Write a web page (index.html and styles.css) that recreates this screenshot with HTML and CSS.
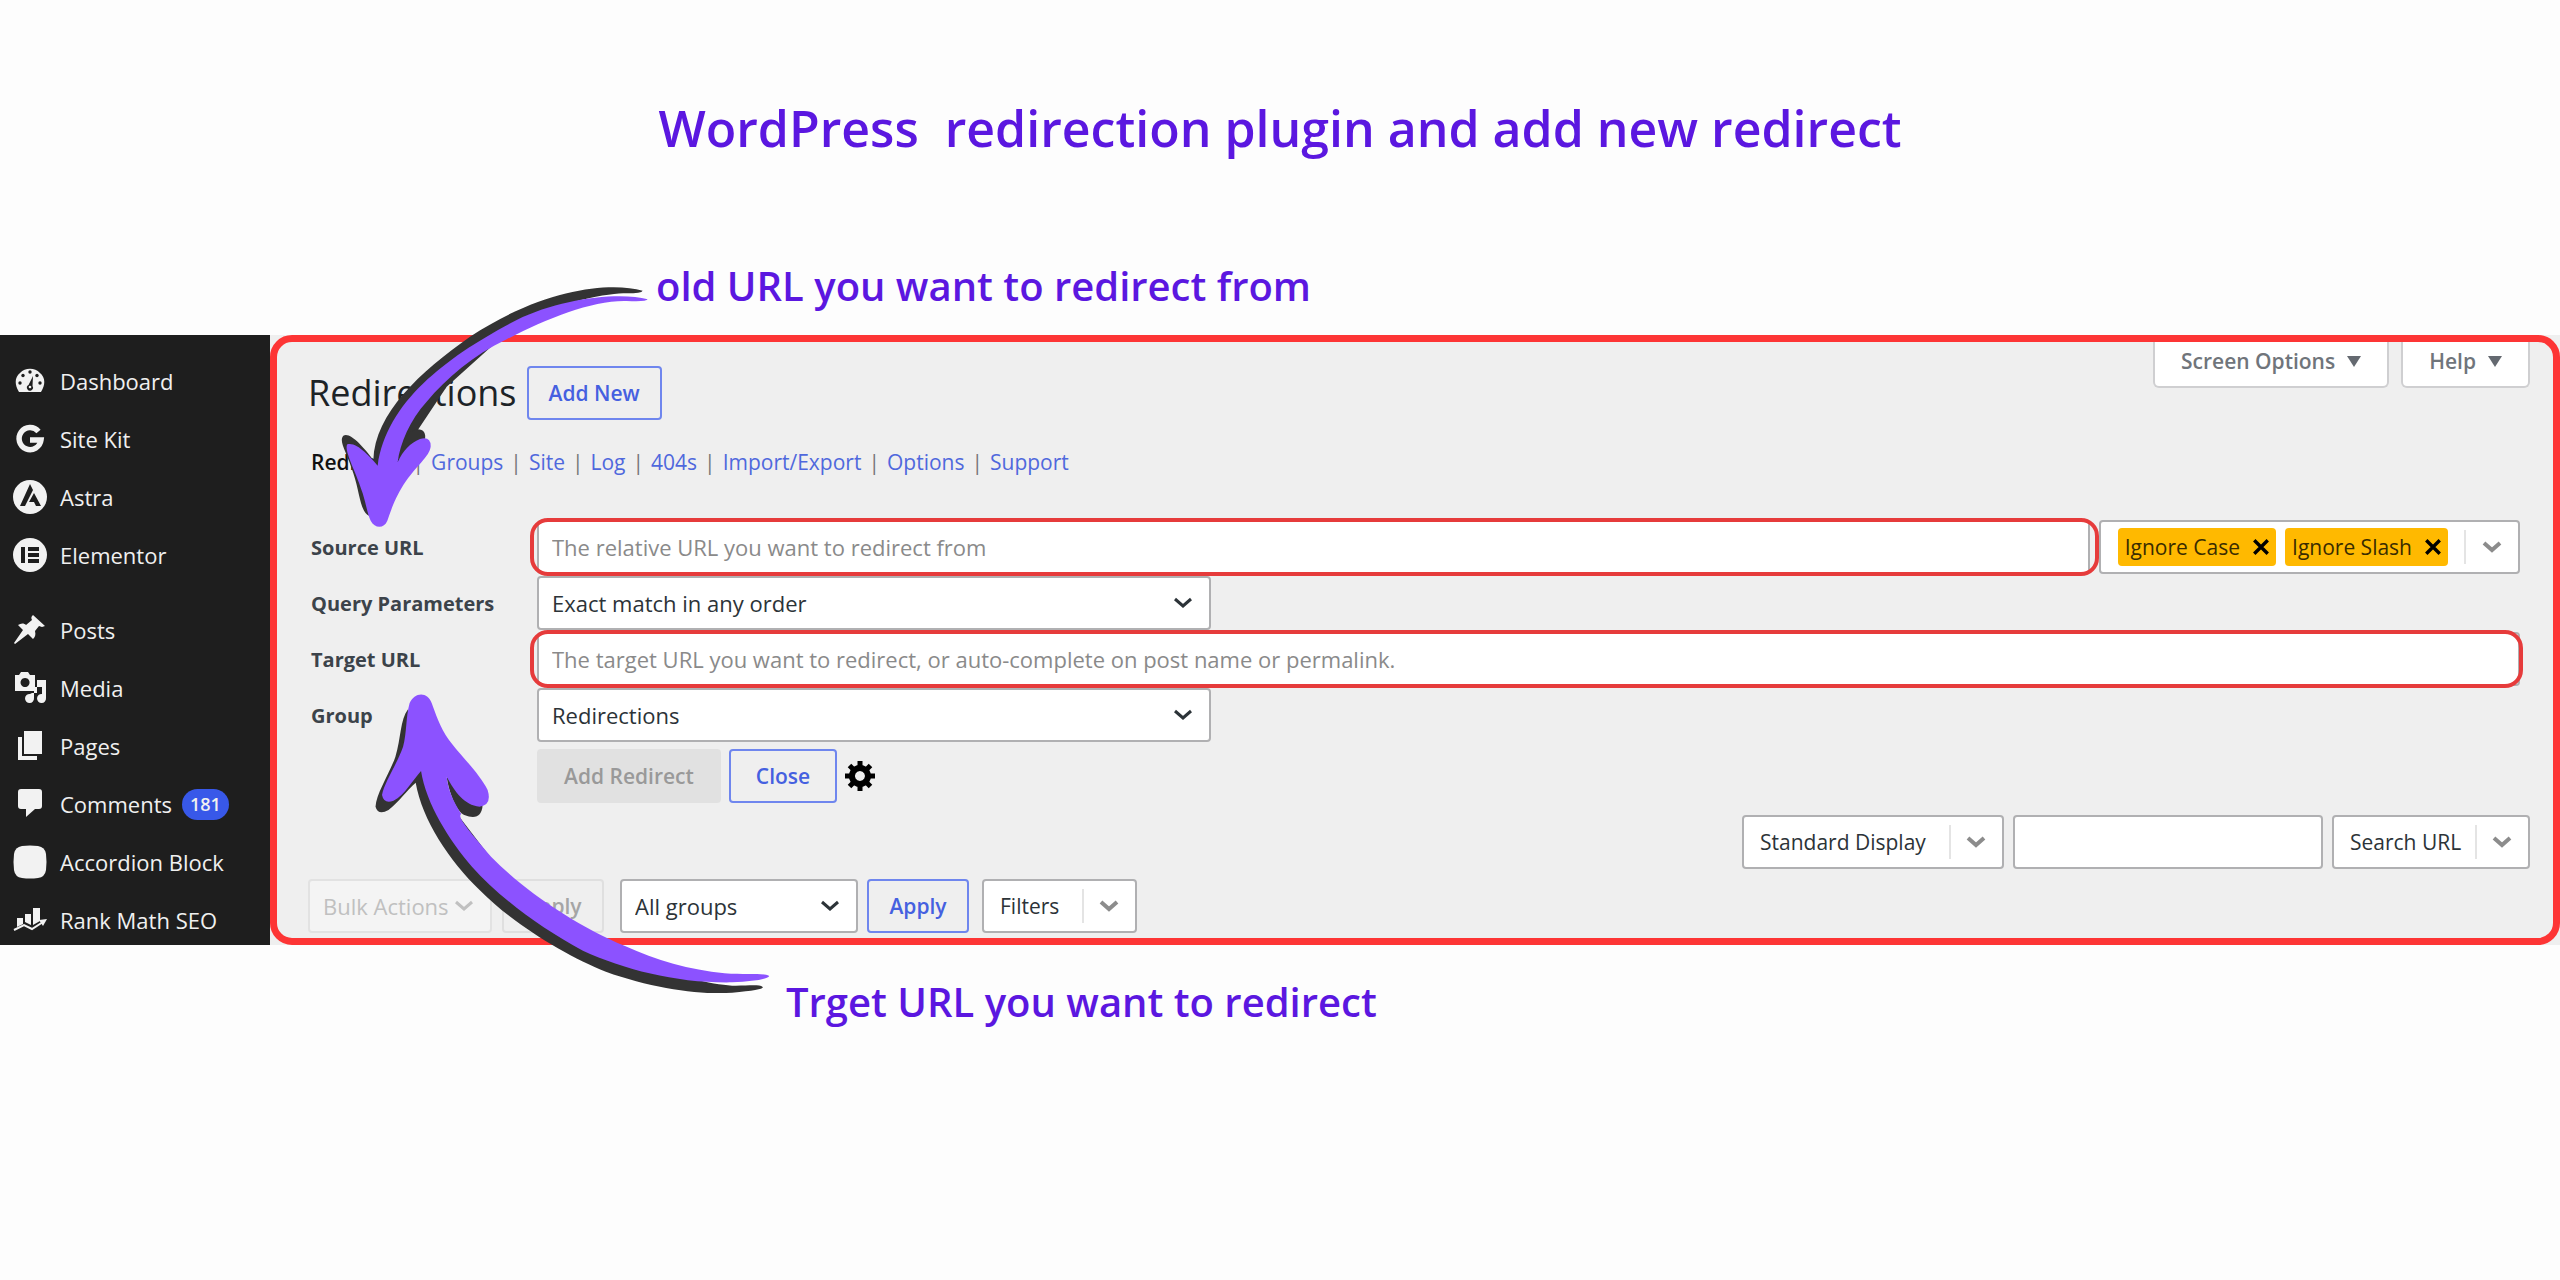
FILE: index.html
```
<!DOCTYPE html>
<html lang="en">

<head>
  <meta charset="UTF-8">
  <meta name="viewport" content="width=device-width, initial-scale=1.0">
  <title>WordPress redirection plugin</title>
  <link rel="stylesheet" href="styles.css">
</head>

<body>
  <h1 class="title">WordPress&nbsp; redirection plugin and add new redirect</h1>
  <p class="note note-source">old URL you want to redirect from</p>

  <div class="admin">
    <nav class="sidebar">
      <a href="#" class="menu-item">
        <svg class="menu-icon" viewBox="0 0 34 34"><path fill="#f2f2f2" d="M6 28C1 20 2 13 7 9a14 14 0 0 1 20 0c5 4 6 11 1 19z"/><g fill="#1e1e1e"><circle cx="17" cy="8" r="1.700"/><circle cx="10" cy="11.500" r="1.700"/><circle cx="24" cy="11.500" r="1.700"/><circle cx="7" cy="19" r="1.700"/><circle cx="27" cy="19" r="1.700"/><path d="M20 12l-.5 10a3 3 0 1 1-4-1z"/></g><circle cx="17" cy="23" r="1.300" fill="#f2f2f2"/></svg>
        Dashboard
      </a>
      <a href="#" class="menu-item">
        <svg class="menu-icon" viewBox="0 0 34 34"><path fill="none" stroke="#f2f2f2" stroke-width="5.500" d="M25.500 9.500a11 11 0 1 0 2.500 8.500h-11"/></svg>
        Site Kit
      </a>
      <a href="#" class="menu-item">
        <svg class="menu-icon" viewBox="0 0 34 34"><circle cx="17" cy="17" r="17" fill="#f2f2f2"/><path fill="#1e1e1e" d="M17 4l3 6-8 16H7zM21 13l7 13h-5l-2-4h-5z"/></svg>
        Astra
      </a>
      <a href="#" class="menu-item">
        <svg class="menu-icon" viewBox="0 0 34 34"><circle cx="17" cy="17" r="17" fill="#f2f2f2"/><path fill="#1e1e1e" d="M8 9h4v16H8zM15 9h11v4H15zM15 15h11v4H15zM15 21h11v4H15z"/></svg>
        Elementor
      </a>
      <a href="#" class="menu-item menu-item-first">
        <svg class="menu-icon" viewBox="0 0 34 34"><path fill="#f2f2f2" d="M20 2l12 11-3 1-3-1-4 5c1 4 0 6-2 8l-5-5L2 31l-1-1 9-13-5-5c3-2 6-2 8 0l6-5c-1-2-1-3 1-5z"/></svg>
        Posts
      </a>
      <a href="#" class="menu-item">
        <svg class="menu-icon" viewBox="0 0 34 34"><path fill="#f2f2f2" fill-rule="evenodd" d="M2 4h4l2-3h7l2 3h5v16H2zM12 7a4.500 4.500 0 1 0 .1 0z"/><path fill="#f2f2f2" d="M24 9h9v18a4.500 4.500 0 1 1-4-4v-7h-8v11a4.500 4.500 0 1 1-4-4l2-1h5z"/></svg>
        Media
      </a>
      <a href="#" class="menu-item">
        <svg class="menu-icon" viewBox="0 0 34 34"><path fill="#f2f2f2" d="M11 2h18v23H11zM5 8h4v19h15v4H5z"/></svg>
        Pages
      </a>
      <a href="#" class="menu-item">
        <svg class="menu-icon" viewBox="0 0 34 34"><path fill="#f2f2f2" d="M8 2h18q3 0 3 3v14q0 3-3 3h-4l-9 8v-8H8q-3 0-3-3V5q0-3 3-3z"/></svg>
        Comments <span class="badge">181</span>
      </a>
      <a href="#" class="menu-item">
        <svg class="menu-icon" viewBox="0 0 34 34"><path fill="#f2f2f2" d="M9 1Q17 0 25 1q7 1 8 8 1 8 0 16-1 7-8 8-8 1-16 0-7-1-8-8Q0 17 1 9 2 2 9 1z"/></svg>
        Accordion Block
      </a>
      <a href="#" class="menu-item">
        <svg class="menu-icon" viewBox="0 0 34 34"><path fill="#f2f2f2" d="M4 15h6v6l-6 3zM12 11h6v11l-6-3zM20 5h7v13l-7 4z"/><path fill="none" stroke="#f2f2f2" stroke-width="2" d="M1 27l10-5 8 4 11-7"/><path fill="#f2f2f2" d="M26 17l8-1-4 7z"/></svg>
        Rank Math SEO
      </a>
    </nav>

    <main class="content">
      <div class="panel">
        <header class="panel-header">
          <h2 class="page-heading">Redirections</h2>
          <button class="button add-new" type="button">Add New</button>
          <div class="screen-links">
            <button class="screen-tab" type="button">Screen Options <span class="triangle"></span></button>
            <button class="screen-tab" type="button">Help <span class="triangle"></span></button>
          </div>
        </header>

        <ul class="subnav">
          <li><a href="#" class="current">Redirects</a></li>
          <li><a href="#">Groups</a></li>
          <li><a href="#">Site</a></li>
          <li><a href="#">Log</a></li>
          <li><a href="#">404s</a></li>
          <li><a href="#">Import/Export</a></li>
          <li><a href="#">Options</a></li>
          <li><a href="#">Support</a></li>
        </ul>

        <form class="redirect-form">
          <label for="source">Source URL</label>
          <div class="source-row">
            <div class="ringed ring-wide">
              <input type="text" id="source" class="text-input" placeholder="The relative URL you want to redirect from">
            </div>
            <div class="flags">
              <span class="chip">Ignore Case <button type="button" class="chip-remove" aria-label="Remove Ignore Case"><svg viewBox="0 0 16 16"><path d="M2 2l12 12M14 2L2 14"/></svg></button></span>
              <span class="chip">Ignore Slash <button type="button" class="chip-remove" aria-label="Remove Ignore Slash"><svg viewBox="0 0 16 16"><path d="M2 2l12 12M14 2L2 14"/></svg></button></span>
              <button type="button" class="flags-toggle" aria-label="Show flags"><svg class="chevron-svg" viewBox="0 0 20 12"><path d="M2 2l8 7 8-7"/></svg></button>
            </div>
          </div>

          <label for="query">Query Parameters</label>
          <div class="select select-wide">
            <select id="query"><option>Exact match in any order</option></select>
            <svg class="chevron-svg" viewBox="0 0 20 12"><path d="M2 2l8 7 8-7"/></svg>
          </div>

          <label for="target">Target URL</label>
          <div class="ringed">
            <input type="text" id="target" class="text-input" placeholder="The target URL you want to redirect, or auto-complete on post name or permalink.">
          </div>

          <label for="group">Group</label>
          <div class="select select-wide">
            <select id="group"><option>Redirections</option></select>
            <svg class="chevron-svg" viewBox="0 0 20 12"><path d="M2 2l8 7 8-7"/></svg>
          </div>

          <div class="form-actions">
            <button class="button button-disabled" type="submit" disabled>Add Redirect</button>
            <button class="button" type="button">Close</button>
            <button class="gear" type="button" aria-label="Advanced options">
              <svg viewBox="0 0 30 30"><path fill="none" stroke="#000" stroke-width="6" d="M15 7a8 8 0 1 1-.1 0z"/><path stroke="#000" stroke-width="5" d="M15 0v5M15 25v5M0 15h5M25 15h5M4.500 4.500L8 8M22 22l3.500 3.500M4.500 25.500L8 22M22 8l3.500-3.500"/></svg>
            </button>
          </div>
        </form>

        <div class="toolbar toolbar-right">
          <div class="select select-split select-display">
            <select aria-label="Display"><option>Standard Display</option></select>
            <svg class="chevron-svg" viewBox="0 0 20 12"><path d="M2 2l8 7 8-7"/></svg>
          </div>
          <input type="text" class="text-input search-input" aria-label="Search">
          <div class="select select-split select-search">
            <select aria-label="Search by"><option>Search URL</option></select>
            <svg class="chevron-svg" viewBox="0 0 20 12"><path d="M2 2l8 7 8-7"/></svg>
          </div>
        </div>

        <div class="toolbar toolbar-left">
          <div class="select select-bulk">
            <select aria-label="Bulk actions" disabled><option>Bulk Actions</option></select>
            <svg class="chevron-svg" viewBox="0 0 20 12"><path d="M2 2l8 7 8-7"/></svg>
          </div>
          <button class="button button-faded" type="button" disabled>Apply</button>
          <div class="select select-groups">
            <select aria-label="Filter by group"><option>All groups</option></select>
            <svg class="chevron-svg" viewBox="0 0 20 12"><path d="M2 2l8 7 8-7"/></svg>
          </div>
          <button class="button button-apply" type="button">Apply</button>
          <div class="select select-split select-filters">
            <select aria-label="Filters"><option>Filters</option></select>
            <svg class="chevron-svg" viewBox="0 0 20 12"><path d="M2 2l8 7 8-7"/></svg>
          </div>
        </div>
      </div>
    </main>
  </div>

  <p class="note note-target">Trget URL you want to redirect</p>

  <!-- hand drawn arrows over the screen -->
  <svg class="arrow arrow-source" viewBox="0 0 1500 900">
    <g fill="#333333">
      <path d="M1148 92C1050 65 850 85 630 230C480 335 345 460 340 600C310 560 270 515 250 527C235 545 260 575 280 640C300 700 300 755 328 768L400 620L560 380L760 200C900 120 1050 100 1100 100Q1145 100 1148 92z"/>
      <path d="M415 607C415 560 440 515 470 508Q500 506 495 540L430 610z"/>
    </g>
    <path fill="#8c52ff" d="M1163 118C1080 95 900 115 770 180C570 285 380 420 353 617C330 590 290 545 262 553C250 570 290 640 308 700C320 740 322 760 332 782C345 806 372 806 382 782C395 745 405 715 430 675C470 615 508 590 512 560Q513 528 480 537C450 550 430 570 413 607C420 550 450 480 500 425C560 355 640 285 740 238C860 175 1000 120 1100 123Q1160 126 1163 118z"/>
  </svg>
  <svg class="arrow arrow-target" viewBox="0 0 1568 1080" preserveAspectRatio="none">
    <g fill="#333333">
      <path d="M413 148C392 180 395 235 380 290C365 340 330 400 328 440Q335 468 362 450C390 425 410 390 433 368C450 480 520 600 600 690C690 795 830 890 930 935C1050 985 1180 1005 1260 998Q1345 990 1340 981C1330 972 1300 978 1260 977C1150 970 900 880 700 700L500 400L440 250z"/>
      <path d="M514 350C520 400 540 455 560 465Q605 485 608 435z"/>
    </g>
    <path fill="#8c52ff" d="M1357 948C1340 938 1300 945 1240 940C1150 930 1060 900 980 858C850 795 720 695 630 590C570 510 540 470 552 462C530 420 518 390 514 350C535 395 560 435 600 440Q633 435 621 390C600 340 545 280 520 240C495 200 485 160 475 130C465 95 430 95 417 130C407 170 410 220 400 260C385 310 350 370 345 405Q350 433 375 422C405 405 425 360 447 333C460 430 520 540 580 620C650 710 760 805 870 872C980 930 1120 970 1260 967Q1350 962 1357 948z"/>
  </svg>
</body>

</html>
```
FILE: styles.css
```
* {
  box-sizing: border-box;
}

body {
  position: relative;
  margin: 0;
  padding: 98px 0 60px;
  background-color: #fdfdfd;
  color: #2c3338;
  font-family: "Open Sans", "Noto Sans", sans-serif;
  font-size: 22px;
}

button, input, select {
  font-family: inherit;
  font-size: inherit;
}

a {
  color: #4f68dd;
  text-decoration: none;
}

.title {
  margin: 0;
  text-align: center;
  font-size: 50px;
  line-height: 60px;
  font-weight: 600;
  color: #5b17e0; /* violet */
}

.note {
  margin: 0;
  font-size: 40px;
  line-height: 48px;
  font-weight: 600;
  color: #5b17e0;
}

.note-source {
  padding: 104px 0 25px 656px;
}

.note-target {
  padding: 33px 0 0 786px;
}

.admin {
  display: flex;
  background-color: #efefef;
}

/* left menu */
.sidebar {
  display: flex;
  flex-direction: column;
  gap: 14px;
  flex: 0 0 270px;
  padding: 25px 0 0 13px;
  background-color: #1e1e1e;
}

.menu-item {
  display: flex;
  align-items: center;
  gap: 10px;
  height: 44px;
  padding-bottom: 2px;
  color: #f0f0f0;
  white-space: nowrap;
}

.menu-item-first {
  margin-top: 17px;
}

.menu-icon {
  width: 34px;
  height: 34px;
  margin-right: 3px;
}

.badge {
  padding: 0 8px;
  border-radius: 16px;
  background-color: #3858e9;
  font-size: 18px;
  line-height: 31px;
  font-weight: 600;
}

/* main panel */
.content {
  flex: 1;
  min-width: 0;
}

.panel {
  padding: 0 23px 5px 31px;
  border: 7px solid #fd3535;
  border-radius: 22px;
}

.panel-header {
  display: flex;
  align-items: flex-start;
}

.page-heading {
  margin: 24px 10px 0 0;
  font-size: 36px;
  line-height: 54px;
  font-weight: 400;
  color: #1d2327;
}

.button {
  height: 54px;
  padding: 0 20px;
  border: 2px solid #6f86ee;
  border-radius: 4px;
  background-color: transparent;
  color: #4560e0;
  font-weight: 600;
  font-size: 21px;
}

.add-new {
  margin-top: 24px;
}

.screen-links {
  display: flex;
  gap: 12px;
  margin-left: auto;
}

.screen-tab {
  display: flex;
  align-items: center;
  gap: 12px;
  height: 46px;
  padding: 0 26px 6px;
  border: 2px solid #cfcfd1;
  border-top: none;
  border-radius: 0 0 6px 6px;
  background-color: #fff;
  color: #70757b;
  font-size: 21px;
  font-weight: 600;
}

.triangle {
  border: 7px solid transparent;
  border-top: 11px solid #646970;
  border-bottom: none;
}

.subnav {
  display: flex;
  margin: 27px 0 43px;
  padding: 0 0 0 3px;
  list-style: none;
  font-size: 21px;
  line-height: 30px;
}

.subnav li + li::before {
  content: "|";
  margin: 0 7px;
  color: #777;
}

.subnav .current {
  color: #111;
  font-weight: 600;
}

.redirect-form {
  display: grid;
  grid-template-columns: 226px 1fr;
  gap: 2px 0;
  align-items: center;
  padding: 0 10px 0 3px;
}

.redirect-form label {
  font-size: 20px;
  font-weight: 700;
  color: #3c434a;
}

.source-row {
  display: flex;
  gap: 9px;
}

.text-input {
  display: block;
  width: 100%;
  height: 54px;
  padding: 0 13px;
  border: 2px solid #b0b0b2;
  border-radius: 4px;
  background-color: #fff;
}

.text-input::placeholder {
  color: #8a8a8a;
}

/* red highlight round a field */
.ringed {
  position: relative;
  flex: 1;
}

.ringed::after {
  content: "";
  position: absolute;
  inset: -2px -3px -2px -7px;
  border: 4px solid #e63b3b;
  border-radius: 18px;
  pointer-events: none;
}

.ring-wide::after {
  right: -9px;
}

.flags {
  display: flex;
  align-items: center;
  gap: 9px;
  height: 54px;
  padding-left: 17px;
  border: 2px solid #b0b0b2;
  border-radius: 4px;
  background-color: #fff;
}

.chip {
  display: flex;
  align-items: center;
  gap: 12px;
  height: 38px;
  padding: 0 6px 0 7px;
  border-radius: 4px;
  background-color: #ffb900;
  color: #3a2c00;
  font-size: 21px;
  white-space: nowrap;
}

.chip-remove {
  width: 18px;
  height: 18px;
  padding: 0;
  border: none;
  background: none;
}

.chip-remove svg {
  display: block;
  fill: none;
  stroke: #000;
  stroke-width: 3;
}

.flags-toggle {
  display: flex;
  align-items: center;
  height: 34px;
  margin-left: 7px;
  padding: 0 16px;
  border: none;
  border-left: 2px solid #e4e4e4;
  background: none;
}

.chevron-svg {
  width: 20px;
  height: 12px;
  fill: none;
  stroke: #2c3338;
  stroke-width: 3;
}

.flags-toggle .chevron-svg,
.select-split .chevron-svg {
  stroke: #8c8c8c;
  stroke-width: 4;
}

.select {
  position: relative;
}

.select select {
  display: block;
  width: 100%;
  height: 54px;
  padding: 0 13px;
  border: 2px solid #b0b0b2;
  border-radius: 4px;
  background-color: #fff;
  color: #2c3338;
  appearance: none;
}

.select .chevron-svg {
  position: absolute;
  top: 21px;
  right: 18px;
  pointer-events: none;
}

.select-split select {
  padding: 0 16px;
  font-size: 21px;
}

/* thin line before the arrow */
.select-split::after {
  content: "";
  position: absolute;
  top: 10px;
  right: 53px;
  height: 34px;
  border-left: 2px solid #e4e4e4;
}

.select-wide {
  width: 34%;
}

.form-actions {
  grid-column: 2;
  display: flex;
  align-items: center;
  gap: 8px;
  margin-top: 5px;
}

.form-actions .button {
  padding: 0 25px;
}

.form-actions .button-disabled {
  border-color: #e1e1e1;
  background-color: #e1e1e1;
  color: #999;
}

.gear {
  width: 30px;
  height: 30px;
  padding: 0;
  border: none;
  background: none;
}

.gear svg {
  display: block;
}

.toolbar {
  display: flex;
}

.toolbar-right {
  justify-content: flex-end;
  gap: 9px;
  margin-top: 12px;
}

.toolbar-left {
  margin-top: 10px;
}

.select-display {
  width: 262px;
}

.search-input {
  width: 310px;
}

.select-search {
  width: 198px;
}

.select-bulk {
  width: 184px;
  margin-right: 10px;
}

.select-bulk select {
  border-color: #e2e2e2;
  background-color: #f4f4f4;
  color: #c0c0c0;
  opacity: 1;
}

.select-bulk .chevron-svg {
  stroke: #c0c0c0;
}

.button-faded {
  width: 102px;
  margin-right: 16px;
  border-color: #dfdfdf;
  color: #a5a5a5;
}

.select-groups {
  width: 238px;
  margin-right: 9px;
}

.button-apply {
  width: 102px;
  margin-right: 13px;
}

.select-filters {
  width: 155px;
}

.arrow {
  position: absolute;
  pointer-events: none;
}

.arrow-source {
  top: 260px;
  left: 260px;
  width: 500px;
  height: 300px;
}

.arrow-target {
  top: 660px;
  left: 250px;
  width: 600px;
  height: 360px;
}
```
